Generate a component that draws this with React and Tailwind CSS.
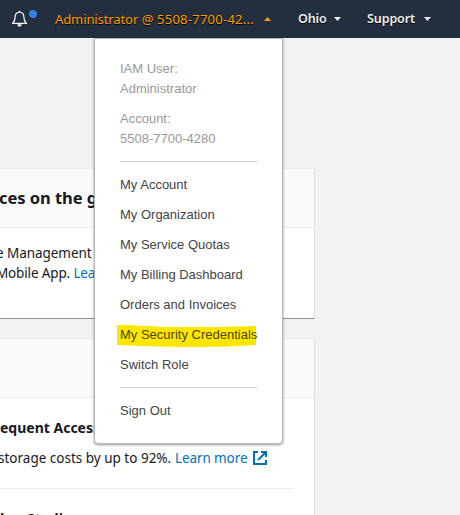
const accountLinks = ["My Account", "My Organization", "My Service Quotas", "My Billing Dashboard", "Orders and Invoices"];

function Bell() {
  return (
    <svg width="17" height="18" viewBox="0 0 17 18" fill="none" stroke="#f2f3f3" strokeWidth="1.3">
      <path d="M8.5 0.8V2M1.5 13.4H15.5C13.6 11.8 12.9 10.4 12.9 7.3C12.9 4 11 2.1 8.5 2.1S4.1 4 4.1 7.3C4.1 10.4 3.4 11.8 1.5 13.4Z" strokeLinejoin="round" />
      <path d="M6.2 14.2H10.8C10.6 15.8 9.7 16.7 8.5 16.7S6.4 15.8 6.2 14.2Z" fill="#f2f3f3" stroke="none" />
    </svg>
  );
}

function Caret({ up = false }) {
  return (
    <svg width="7" height="4" viewBox="0 0 7 4" className="shrink-0">
      <path d={up ? "M0 4L3.5 0L7 4Z" : "M0 0H7L3.5 4Z"} fill={up ? "#ff9900" : "#eeeeee"} />
    </svg>
  );
}

function Header() {
  return (
    <header className="flex h-[38px] items-center bg-[#232f3e] font-['Noto_Sans',sans-serif] text-[13px] leading-[18px] whitespace-nowrap text-[#eeeeee] [text-shadow:0_1px_0_#000]">
      <div className="flex w-[55px] shrink-0 pl-[11px]">
        <Bell />
        <span className="ml-px h-2 w-2 rounded-full bg-[#3184dd]" />
      </div>
      <div className="flex w-[243px] shrink-0 items-center">
        <span className="w-[209px] tracking-[0.15px] text-[#ff9900]">
          <span className="tracking-[-0.1px]">Administrator</span> @ <span className="tracking-[0.25px]">5508-7700-42...</span>
        </span>
        <Caret up />
      </div>
      <div className="flex w-[69px] shrink-0 items-center">
        <span className="w-9 text-[12.5px] font-semibold tracking-[-0.1px]">Ohio</span>
        <Caret />
      </div>
      <div className="flex items-center">
        <span className="w-[57px] text-[12.5px] font-semibold tracking-[-0.1px]">Support</span>
        <Caret />
      </div>
    </header>
  );
}

function AccountMenu() {
  return (
    <div className="absolute top-[38px] left-[94px] h-[406px] w-[189px] rounded-b-[4px] border border-[#b4b8b9] bg-white px-[25px] pt-5 font-['Liberation_Sans',Arial,sans-serif] text-[13px] leading-5 whitespace-nowrap text-[#444444] shadow-[0_1px_3px_rgba(0,0,0,0.4)]">
      <div className="text-[#999999]">
        <p>IAM User:</p>
        <p>Administrator</p>
        <p className="mt-2.5">Account:</p>
        <p>5508-7700-4280</p>
      </div>
      <hr className="mt-3 mb-[13px] border-[#cccccc]" />
      <ul className="flex flex-col gap-2.5">
        {accountLinks.map((label) => (
          <li key={label}>{label}</li>
        ))}
        <li className="relative">
          <svg className="absolute top-0 -left-[3px]" width="140" height="22" viewBox="0 0 140 22">
            <path d="M0 0C20 0 35 2 61 2C90 2 110 2 139 1V20C124 21 105 22 75 22C45 22 25 21 0 20Z" fill="#ffe600" />
          </svg>
          <span className="relative text-[#4c4700]">My Security Credentials</span>
        </li>
        <li>Switch Role</li>
      </ul>
      <hr className="mt-3 mb-[13px] border-[#cccccc]" />
      <p>Sign Out</p>
    </div>
  );
}

function ExternalLink() {
  return (
    <svg width="14" height="14" viewBox="0 0 14 14" fill="none" stroke="#0073bb" strokeWidth="2">
      <path d="M5 1H1V13H13V9M8 1H13V6M12.5 1.5L5 9" />
    </svg>
  );
}

export default function App() {
  return (
    <div className="relative h-[515px] w-[460px] overflow-hidden bg-[#f1f3f3] font-['Noto_Sans',sans-serif] text-[13.5px] leading-5 whitespace-nowrap text-[#16191f]">
      <Header />
      <main className="flex w-[315px] flex-col gap-[19px] pt-[130px]">
        <section className="h-[151px] border-t border-r border-b border-t-[#eaeded] border-r-[#dcdfdf] border-b-[#879596] bg-white">
          <div className="h-[59px] border-b border-[#eaeded] bg-[#fafafa] pt-[18px]">
            <h2 className="-ml-px text-[16.5px] leading-[22px] font-bold tracking-[-0.05px]">ces on the go</h2>
          </div>
          <div className="pt-[15px]">
            <p className="-ml-1 tracking-[-0.05px]">e Management</p>
            <p className="-ml-1 tracking-[-0.15px]">Mobile App. <a className="text-[#0073bb]">Learn more</a></p>
          </div>
        </section>
        <section className="h-[200px] border-t border-r border-t-[#eaeded] border-r-[#dcdfdf] bg-white">
          <div className="h-[59px] border-b border-[#eaeded] bg-[#fafafa]" />
          <div className="mr-5 border-b border-[#eaeded] pt-5 pb-5">
            <h3 className="text-[14px] font-bold">equent Access</h3>
            <p className="mt-2.5 -ml-0.5 flex items-center">
              <span className="w-[173px]">storage costs by up to 92%.</span>
              <a className="ml-1 flex items-center text-[#0073bb]">
                <span className="w-[78px] tracking-[-0.1px]">Learn more</span>
                <ExternalLink />
              </a>
            </p>
          </div>
          <h3 className="mt-5 text-[14px] font-bold">ker Studio</h3>
        </section>
      </main>
      <AccountMenu />
    </div>
  );
}
